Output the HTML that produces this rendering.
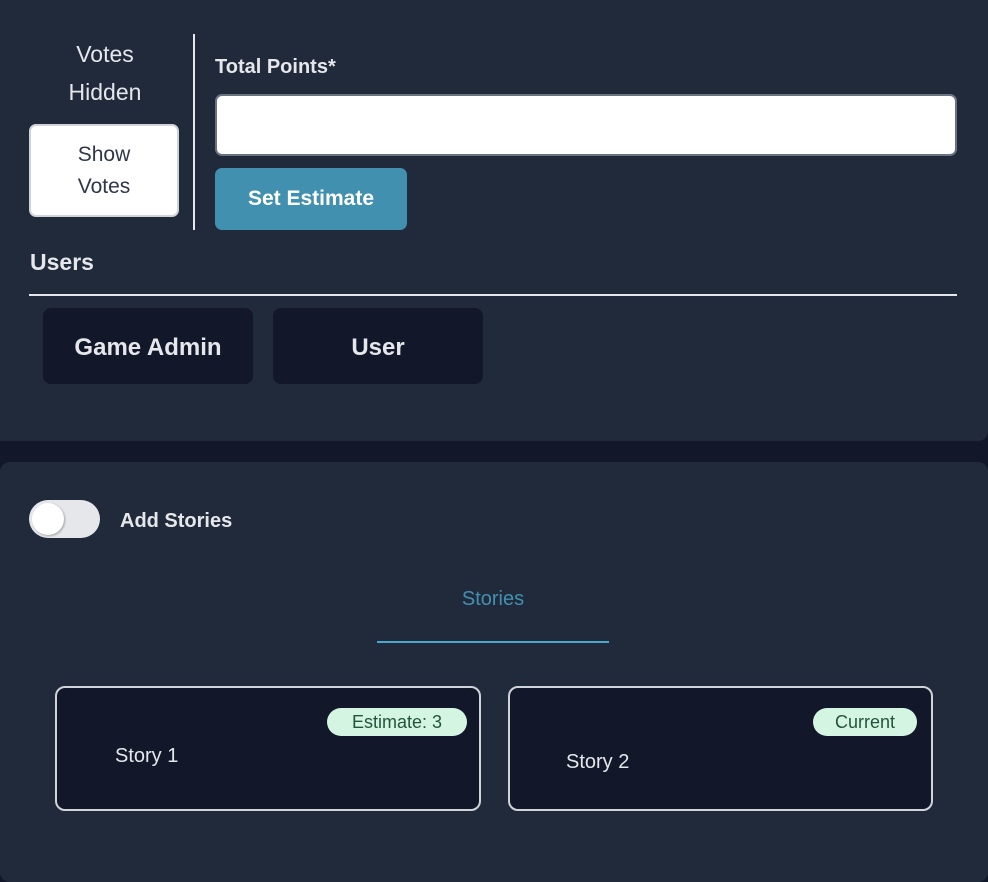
<!DOCTYPE html>
<html><head><style>
*{box-sizing:border-box;margin:0;padding:0}
body{width:988px;height:864px;background:#121829;font-family:"Liberation Sans",sans-serif;position:relative;overflow:hidden;color:#e8eaee}
.a{position:absolute}
.panel{background:#212a3b;border-radius:10px}
.c{display:flex;align-items:center;justify-content:center;text-align:center}
</style></head><body>
<div class="a panel" style="left:-10px;top:-10px;width:998px;height:451px"></div>
<div class="a panel" style="left:0;top:462px;width:988px;height:420px"></div>

<div class="a" style="left:30px;top:35px;width:150px;text-align:center;font-size:23px;line-height:38px;color:#e5e7eb">Votes<br>Hidden</div>
<div class="a c" style="left:29px;top:124px;width:150px;height:93px;background:#fff;border:2px solid #d0d3d8;border-radius:7px;color:#2d3748;font-size:21px;line-height:32px">Show<br>Votes</div>
<div class="a" style="left:193px;top:34px;width:2px;height:196px;background:#e5e7eb"></div>
<div class="a" style="left:215px;top:56px;font-size:20px;font-weight:bold;color:#e5e7eb">Total Points*</div>
<div class="a" style="left:215px;top:94px;width:742px;height:62px;background:#fff;border:2px solid #6b7280;border-radius:7px"></div>
<div class="a c" style="left:215px;top:168px;width:192px;height:62px;background:#4190b0;border-radius:7px;color:#fff;font-size:21px;font-weight:bold">Set Estimate</div>
<div class="a" style="left:30px;top:249px;font-size:23px;font-weight:bold;color:#e5e7eb">Users</div>
<div class="a" style="left:29px;top:294px;width:928px;height:2px;background:#e5e7eb"></div>
<div class="a" style="left:43px;top:308px;width:210px;height:76px;background:#121829;border-radius:8px"></div>
<div class="a c" style="left:43px;top:310px;width:210px;height:76px;font-size:24px;font-weight:bold;color:#e5e7eb">Game Admin</div>
<div class="a" style="left:273px;top:308px;width:210px;height:76px;background:#121829;border-radius:8px"></div>
<div class="a c" style="left:273px;top:310px;width:210px;height:76px;font-size:24px;font-weight:bold;color:#e5e7eb">User</div>

<div class="a" style="left:29px;top:500px;width:71px;height:38px;background:#e5e7eb;border-radius:19px"></div>
<div class="a" style="left:32px;top:503px;width:32px;height:32px;background:#fff;border-radius:50%;box-shadow:1px 1px 2px rgba(0,0,0,.3)"></div>
<div class="a" style="left:120px;top:510px;font-size:20px;font-weight:bold;color:#e5e7eb">Add Stories</div>
<div class="a" style="left:377px;top:588px;width:232px;text-align:center;font-size:20px;color:#4190b0">Stories</div>
<div class="a" style="left:377px;top:641px;width:232px;height:2px;background:#4ba8c8"></div>

<div class="a" style="left:55px;top:686px;width:426px;height:125px;background:#121829;border:2px solid #d0d3d8;border-radius:10px"></div>
<div class="a c" style="left:327px;top:708px;width:140px;height:28px;background:#d5f5e3;border-radius:14px;color:#22543d;font-size:18px">Estimate: 3</div>
<div class="a" style="left:115px;top:745px;font-size:20px;color:#e5e7eb">Story 1</div>
<div class="a" style="left:508px;top:686px;width:425px;height:125px;background:#121829;border:2px solid #d0d3d8;border-radius:10px"></div>
<div class="a c" style="left:813px;top:708px;width:104px;height:28px;background:#d5f5e3;border-radius:14px;color:#22543d;font-size:18px">Current</div>
<div class="a" style="left:566px;top:751px;font-size:20px;color:#e5e7eb">Story 2</div>
</body></html>
